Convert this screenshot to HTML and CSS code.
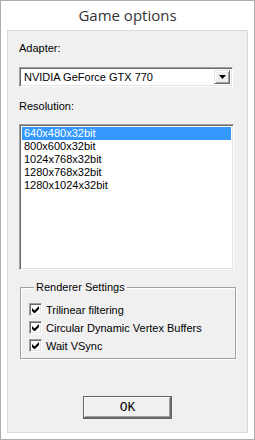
FILE: index.html
```html
<!DOCTYPE html>
<html lang="en">
<head>
  <meta charset="UTF-8" />
  <title>Game options</title>
  <link rel="stylesheet" href="styles.css">
</head>
<body>
  <div class="window">
    <div class="title">Game options</div>
    <div class="panel">
      <div class="label">Adapter:</div>
      <div class="combo">
        <div class="combo-text">NVIDIA GeForce GTX 770</div>
        <div class="combo-btn">
          <svg width="7" height="4" viewBox="0 0 7 4"><path d="M0 0h7L3.5 4z" fill="#000"/></svg>
        </div>
      </div>

      <div class="label label-gap">Resolution:</div>
      <div class="listbox">
        <div class="item selected">640x480x32bit</div>
        <div class="item">800x600x32bit</div>
        <div class="item">1024x768x32bit</div>
        <div class="item">1280x768x32bit</div>
        <div class="item">1280x1024x32bit</div>
      </div>

      <fieldset class="group">
        <legend>Renderer Settings</legend>
        <label class="check"><span class="box"><svg width="7" height="7" viewBox="0 0 7 7"><path d="M0 2v3l2 2h1l4-4V0L2.5 4.5z" fill="#000"/></svg></span>Trilinear filtering</label>
        <label class="check"><span class="box"><svg width="7" height="7" viewBox="0 0 7 7"><path d="M0 2v3l2 2h1l4-4V0L2.5 4.5z" fill="#000"/></svg></span>Circular Dynamic Vertex Buffers</label>
        <label class="check"><span class="box"><svg width="7" height="7" viewBox="0 0 7 7"><path d="M0 2v3l2 2h1l4-4V0L2.5 4.5z" fill="#000"/></svg></span>Wait VSync</label>
      </fieldset>

      <div class="actions">
        <button class="ok">OK</button>
      </div>
    </div>
  </div>
</body>
</html>
```

FILE: styles.css
```css
body {
  margin: 0;
  font-family: "Liberation Sans", Arial, sans-serif;
  font-size: 11px;
  color: #000;
  background: #fff;
}

.window {
  width: 255px;
  height: 440px;
  box-sizing: border-box;
  border: 1px solid #adadad;
  background: #fff;
  padding: 0 6px 6px;
  display: flex;
  flex-direction: column;
}

.title {
  height: 29px;
  line-height: 29px;
  text-align: center;
  font-family: "Open Sans", "Noto Sans", sans-serif;
  font-size: 15px;
  color: #333;
}

.panel {
  flex: 1;
  border: 1px solid #d9d9d9;
  background: #f0f0f0;
  padding: 11px 0 0 11px;
}

.label { line-height: 13px; }
.label-gap { margin-top: 13px; }

/* --- combo box --- */
.combo {
  margin-top: 12px;
  width: 214px;
  height: 20px;
  box-sizing: border-box;
  border: 1px solid;
  border-color: #a0a0a0 #fff #fff #a0a0a0;
  box-shadow: inset 1px 1px #696969, inset -1px -1px #e3e3e3;
  background: #fff;
  display: flex;
  padding: 2px;
}
.combo-text {
  flex: 1;
  line-height: 14px;
  padding-left: 2px;
}
.combo-btn {
  width: 16px;
  box-sizing: border-box;
  background: #f0f0f0;
  border: 1px solid;
  border-color: #e3e3e3 #696969 #696969 #e3e3e3;
  box-shadow: inset 1px 1px #fff, inset -1px -1px #a0a0a0;
  display: flex;
  align-items: center;
  justify-content: center;
}

/* --- list box --- */
.listbox {
  margin-top: 11px;
  width: 215px;
  height: 146px;
  box-sizing: border-box;
  border: 1px solid;
  border-color: #a0a0a0 #fff #fff #a0a0a0;
  box-shadow: inset 1px 1px #696969, inset -1px -1px #e3e3e3;
  background: #fff;
  padding: 2px;
}
.item {
  line-height: 13px;
  padding-left: 2px;
}
.item.selected { background: #3399ff; color: #fff; }

/* --- group box --- */
.group {
  margin: 11px 0 0 1px;
  width: 216px;
  box-sizing: border-box;
  border: 1px solid #a0a0a0;
  box-shadow: inset 1px 1px #fff, 1px 1px #fff;
  padding: 9px 0 6px 8px;
}
.group legend {
  padding: 0 2px;
  margin-left: 5px;
  line-height: 13px;
}
.check {
  display: flex;
  align-items: center;
  height: 13px;
  gap: 4px;
  margin-bottom: 5px;
}
.check:last-child { margin-bottom: 0; }
.box {
  width: 13px;
  height: 13px;
  box-sizing: border-box;
  border: 1px solid;
  border-color: #a0a0a0 #fff #fff #a0a0a0;
  box-shadow: inset 1px 1px #696969, inset -1px -1px #e3e3e3;
  background: #fff;
  display: flex;
  align-items: center;
  justify-content: center;
}

/* --- button --- */
.actions {
  margin-top: 37px;
  padding-right: 11px;
  display: flex;
  justify-content: center;
}
.ok {
  width: 89px;
  height: 23px;
  border: 1px solid #646464;
  box-shadow: inset -1px -1px #696969, inset 1px 1px #fff, inset -2px -2px #a0a0a0;
  background: #f0f0f0;
  font-family: "Liberation Mono", monospace;
  font-size: 13px;
  color: #000;
  padding: 0;
}
```
